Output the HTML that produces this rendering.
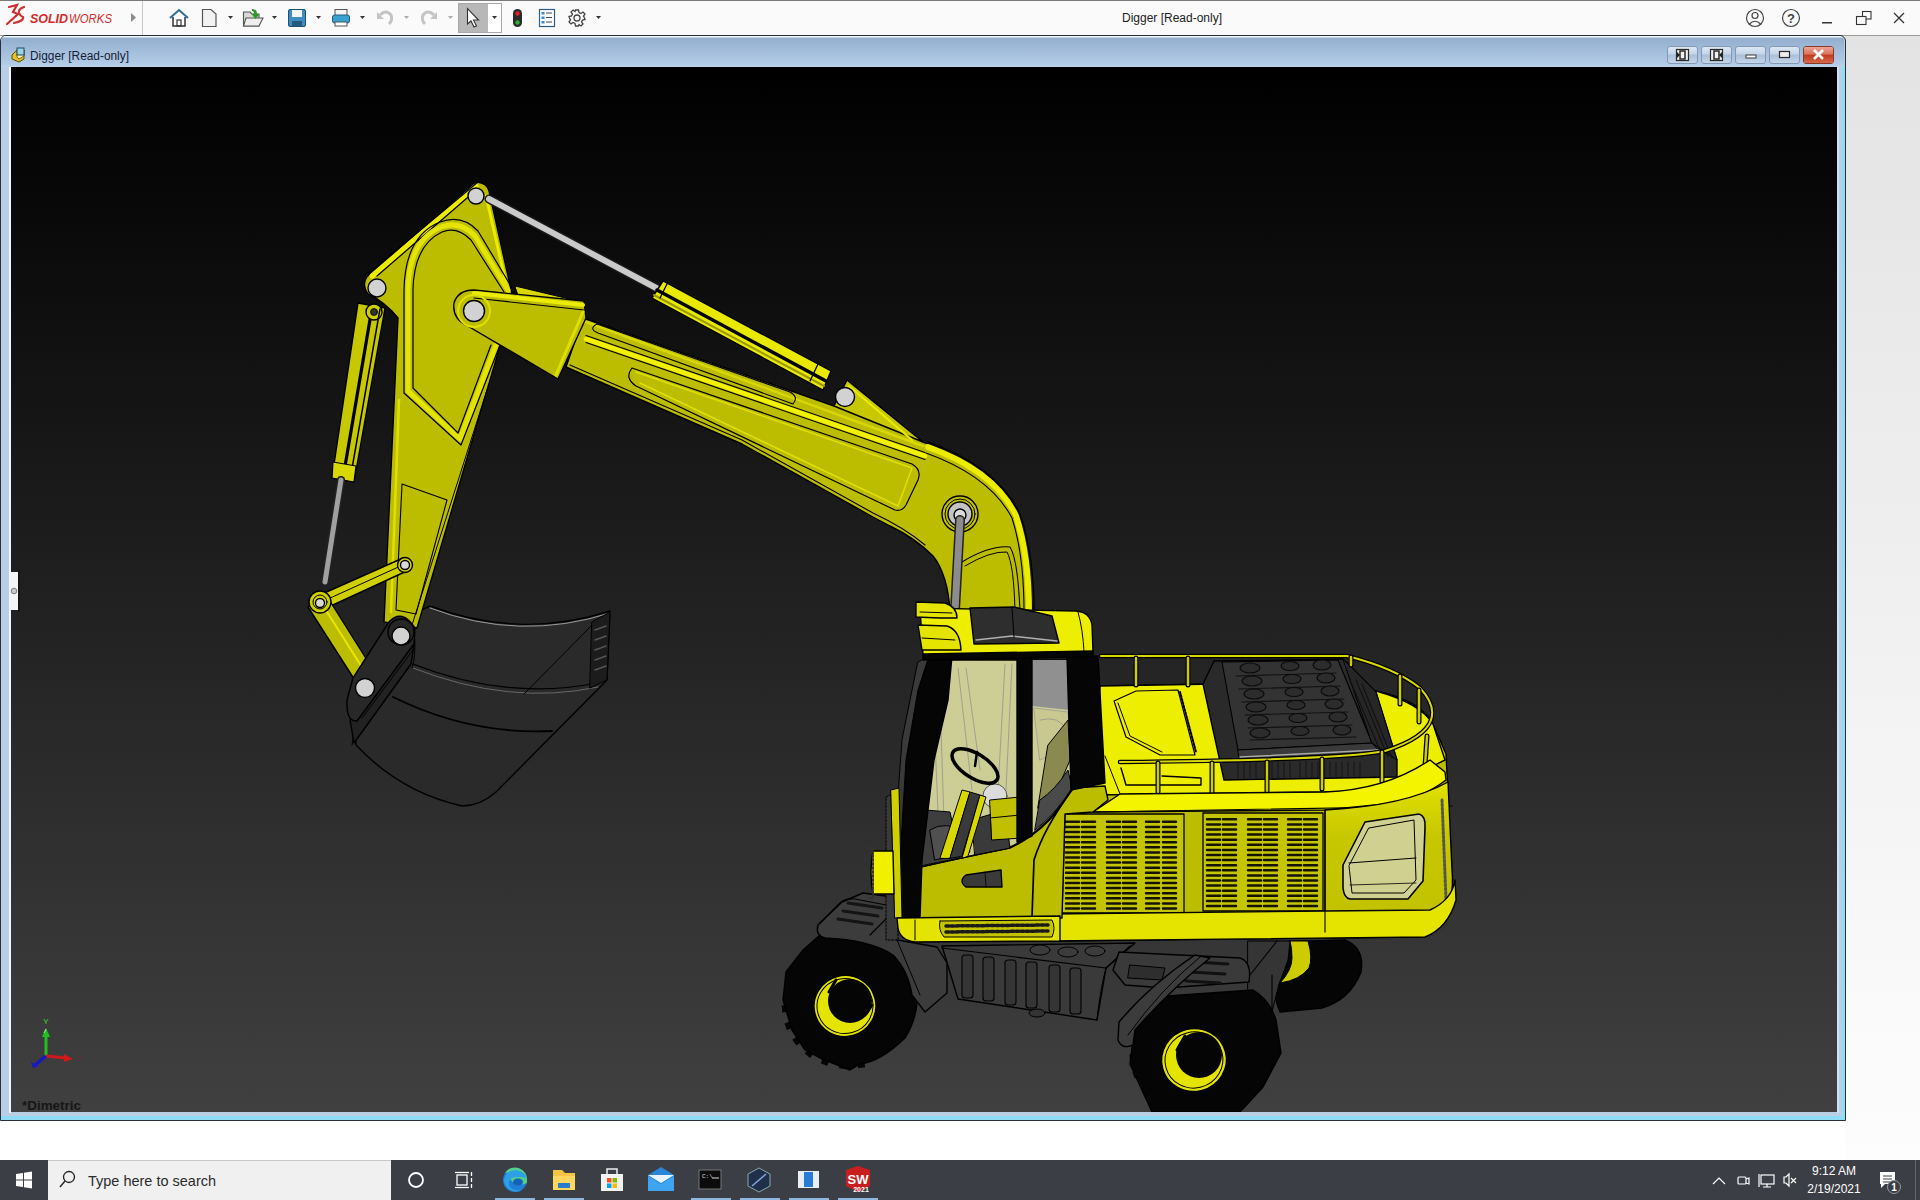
<!DOCTYPE html>
<html><head><meta charset="utf-8">
<style>
*{margin:0;padding:0;box-sizing:border-box}
html,body{width:1920px;height:1200px;overflow:hidden;background:#fff;font-family:"Liberation Sans",sans-serif}
.a{position:absolute}
#topbar{left:0;top:0;width:1920px;height:36px;background:#fafafa;border-bottom:1px solid #d8d8d8}
#rightbg{left:1845px;top:36px;width:75px;height:1124px;background:linear-gradient(#e3e3e3,#fdfdfd)}
#win{left:0;top:35px;width:1846px;height:1086px;background:#b9cfe6;border:1px solid #2a3038;border-radius:6px 6px 0 0}
#wintitle{left:1px;top:36px;width:1843px;height:31px;background:linear-gradient(#eef8fb 0px,#eef8fb 1px,#94afcd 2px,#9db8d6 10px,#b2cbe6 28px,#bcd3ec 31px);border-radius:5px 5px 0 0}
#vp{left:11px;top:67px;width:1826px;height:1045px;background:linear-gradient(#000 0%,#404040 100%)}
#taskbar{left:0;top:1160px;width:1920px;height:40px;background:#3b3e45}
.tt{font-size:12px;color:#1a1a2a}
.wbtn{top:46px;width:30px;height:18px;border:1px solid #8aa0b8;border-radius:3px;background:linear-gradient(#dde8f4,#bfd1e5 50%,#a9bfd8 51%,#c5d6ea)}
</style></head><body>
<div id="topbar" class="a"></div>
<svg class="a" style="left:0;top:0" width="1920" height="36" viewBox="0 0 1920 36">
<line x1="0" y1="0.5" x2="1920" y2="0.5" stroke="#7a7a7a"/>
<line x1="0" y1="35.5" x2="1920" y2="35.5" stroke="#9a9a9a"/>
<!-- 3DS logo -->
<g fill="none" stroke="#d03030" stroke-width="2.2" stroke-linecap="round">
<path d="M9 7 L17 5 L13 12 L18 14 L7 24"/>
<path d="M24 7 Q18 9 19 13 Q20 16 23 17 Q24 21 14 23"/>
</g>
<text x="30" y="23" font-family="Liberation Sans" font-weight="bold" font-style="italic" font-size="13.5" fill="#d42a2a" textLength="38" lengthAdjust="spacingAndGlyphs">SOLID</text>
<text x="69" y="23" font-family="Liberation Sans" font-size="13.5" font-style="italic" fill="#d42a2a" textLength="43" lengthAdjust="spacingAndGlyphs">WORKS</text>
<path d="M131 13 L136 17.5 L131 22 Z" fill="#8a8a8a"/>
<line x1="142.5" y1="1" x2="142.5" y2="35" stroke="#c8c8c8"/>
<!-- home -->
<g stroke="#2d6f96" stroke-width="2" fill="none"><path d="M170 18 L179 10 L188 18"/></g>
<path d="M173 17 L173 26 L185 26 L185 17" fill="#fff" stroke="#333" stroke-width="1.5"/>
<rect x="177" y="20" width="4" height="6" fill="none" stroke="#333" stroke-width="1.2"/>
<!-- new -->
<path d="M202.5 9.5 L211 9.5 L216 14 L216 26.5 L202.5 26.5 Z" fill="#f2f2f2" stroke="#555" stroke-width="1.2"/>
<path d="M228 16 L233 16 L230.5 19 Z" fill="#333"/>
<!-- open -->
<path d="M243.5 12 L250 12 L252 14 L259 14 L259 26 L243.5 26 Z" fill="#d8d8d8" stroke="#555" stroke-width="1.1"/>
<path d="M246 18 L263 18 L259 26 L243.5 26 Z" fill="#eee" stroke="#555" stroke-width="1.1"/>
<path d="M252 9 Q257 9 257 14 L259.5 14 L255.5 19 L251.5 14 L254 14 Q254 11 252 11 Z" fill="#2e9a2e"/>
<path d="M272 16 L277 16 L274.5 19 Z" fill="#333"/>
<!-- save -->
<rect x="288.5" y="9.5" width="17" height="17" rx="1.5" fill="#3f8cc0" stroke="#1f4f73"/>
<rect x="292" y="10" width="10" height="7" fill="#f4f4f4"/>
<rect x="292" y="21" width="10" height="5" fill="#245a80"/>
<path d="M316 16 L321 16 L318.5 19 Z" fill="#333"/>
<!-- print -->
<rect x="335" y="9.5" width="12" height="6" fill="#f4f4f4" stroke="#555"/>
<rect x="332.5" y="15" width="17" height="8" rx="2" fill="#3aa0cf" stroke="#255f80"/>
<rect x="335" y="22" width="12" height="4" fill="#fff" stroke="#555"/>
<path d="M360 16 L365 16 L362.5 19 Z" fill="#333"/>
<!-- undo/redo gray -->
<path d="M380 15 Q386 9 391 15 Q393 20 389 24" fill="none" stroke="#c4c4c4" stroke-width="3"/>
<path d="M377 12 L377 19 L384 19 Z" fill="#c4c4c4"/>
<path d="M404 16 L409 16 L406.5 19 Z" fill="#aaa"/>
<path d="M434 15 Q428 9 423 15 Q421 20 425 24" fill="none" stroke="#c4c4c4" stroke-width="3"/>
<path d="M437 12 L437 19 L430 19 Z" fill="#c4c4c4"/>
<path d="M448 16 L453 16 L450.5 19 Z" fill="#aaa"/>
<!-- select -->
<rect x="458.5" y="3.5" width="43" height="29" fill="#fff" stroke="#a8a8a8"/>
<rect x="459" y="4" width="29" height="28" fill="#b8b8b8"/>
<path d="M467.5 8.5 L467.5 24 L471 21 L474 27 L476.5 26 L473.5 20 L478.5 20 Z" fill="#fff" stroke="#333" stroke-width="1.1"/>
<path d="M492 16 L497 16 L494.5 19 Z" fill="#333"/>
<!-- traffic light -->
<rect x="513" y="9" width="9" height="18" rx="4.5" fill="#2a2a2a"/>
<circle cx="517.5" cy="13.5" r="2.2" fill="#e02020"/>
<circle cx="517.5" cy="22.5" r="2.2" fill="#30b030"/>
<!-- list -->
<rect x="539.5" y="9.5" width="15" height="17" fill="#fff" stroke="#2d5f86" stroke-width="1.2"/>
<rect x="541.5" y="12" width="3" height="2.5" fill="#3a8bc8"/><line x1="546" y1="13" x2="552" y2="13" stroke="#444"/>
<rect x="541.5" y="16.5" width="3" height="2.5" fill="#3a8bc8"/><line x1="546" y1="17.5" x2="552" y2="17.5" stroke="#444"/>
<rect x="541.5" y="21" width="3" height="2.5" fill="#3a8bc8"/><line x1="546" y1="22" x2="552" y2="22" stroke="#444"/>
<!-- gear -->
<g transform="translate(577,18)" fill="none" stroke="#444" stroke-width="1.3">
<circle r="3"/>
<path d="M-1.5 -8 L1.5 -8 L2 -5.5 L4 -4.5 L6 -6 L8 -4 L6.5 -2 L7.5 0 L8 1.5 L5.5 2 L4.5 4 L6 6 L4 8 L2 6.5 L1.5 8 L-1.5 8 L-2 5.5 L-4 4.5 L-6 6 L-8 4 L-6.5 2 L-7.5 0 L-8 -1.5 L-5.5 -2 L-4.5 -4 L-6 -6 L-4 -8 L-2 -6.5 Z"/>
</g>
<path d="M596 16 L601 16 L598.5 19 Z" fill="#333"/>
<text x="1172" y="22" text-anchor="middle" font-family="Liberation Sans" font-size="12" fill="#222">Digger [Read-only]</text>
<!-- right icons -->
<g fill="none" stroke="#444" stroke-width="1.2">
<circle cx="1755" cy="18" r="8.5"/>
<circle cx="1755" cy="15.5" r="3"/>
<path d="M1749 24.5 Q1755 18 1761 24.5"/>
<circle cx="1791" cy="18" r="8.5"/>
</g>
<text x="1791" y="23" text-anchor="middle" font-family="Liberation Sans" font-weight="bold" font-size="13" fill="#444">?</text>
<rect x="1822" y="22" width="10" height="1.5" fill="#333"/>
<g fill="none" stroke="#333" stroke-width="1.1">
<rect x="1862.5" y="11.5" width="8.5" height="7.5"/>
<rect x="1856.5" y="16.5" width="9.5" height="8" fill="#f7f7f7"/>
<line x1="1894" y1="13" x2="1904" y2="23" stroke-width="1.3"/>
<line x1="1904" y1="13" x2="1894" y2="23" stroke-width="1.3"/>
</g>
</svg>
<div id="rightbg" class="a"></div>
<div id="win" class="a"></div>
<div id="wintitle" class="a"></div>
<svg class="a" style="left:0;top:36px" width="1846" height="32" viewBox="0 36 1846 32">
<g transform="translate(11,47)">
<path d="M1 8 L6 3 L13 3 L13 12 L8 15 L1 12 Z" fill="#e8c020" stroke="#5a4a10" stroke-width="1"/>
<path d="M6 3 L13 3 L13 9 L8 12 L6 10 Z" fill="#fff3b0" stroke="#5a4a10" stroke-width="0.8"/>
<rect x="6" y="1" width="7" height="7" fill="#9ad4e0" stroke="#1a4a60" stroke-width="1"/>
</g>
<text x="30" y="60" font-family="Liberation Sans" font-size="12.5" fill="#141c38" textLength="99" lengthAdjust="spacingAndGlyphs">Digger [Read-only]</text>
<defs>
<linearGradient id="wb" x1="0" y1="0" x2="0" y2="1"><stop offset="0" stop-color="#dfe9f4"/><stop offset="0.45" stop-color="#c3d4e7"/><stop offset="0.5" stop-color="#a9bfd8"/><stop offset="1" stop-color="#c6d7ea"/></linearGradient>
<linearGradient id="wr" x1="0" y1="0" x2="0" y2="1"><stop offset="0" stop-color="#eba593"/><stop offset="0.45" stop-color="#d9735a"/><stop offset="0.5" stop-color="#c23a1d"/><stop offset="1" stop-color="#d8694c"/></linearGradient>
</defs>
<g stroke="#8399b3" stroke-width="1">
<rect x="1667.5" y="46.5" width="30" height="17" rx="2.5" fill="url(#wb)"/>
<rect x="1701.5" y="46.5" width="30" height="17" rx="2.5" fill="url(#wb)"/>
<rect x="1735.5" y="46.5" width="30" height="17" rx="2.5" fill="url(#wb)"/>
<rect x="1769.5" y="46.5" width="30" height="17" rx="2.5" fill="url(#wb)"/>
<rect x="1803.5" y="46.5" width="30" height="17" rx="2.5" fill="url(#wb)" stroke="#8a3a2a"/>
</g>
<rect x="1804" y="47" width="29" height="16" rx="2" fill="url(#wr)"/>
<g fill="none" stroke="#2a2a2a" stroke-width="1.2">
<rect x="1676.5" y="49.5" width="12" height="11" fill="#f0f0f0"/>
<rect x="1710.5" y="49.5" width="12" height="11" fill="#f0f0f0"/>
<rect x="1680" y="51" width="5" height="8" stroke-width="1.5"/>
<rect x="1714" y="51" width="5" height="8" stroke-width="1.5"/>
<rect x="1746" y="55" width="10" height="3" fill="#fff" stroke="#555"/>
<rect x="1779.5" y="51.5" width="10" height="6" fill="#eee"/>
</g>
<path d="M1677 52 L1680 55 L1677 58 Z" fill="#222"/>
<path d="M1722 52 L1719 55 L1722 58 Z" fill="#222"/>
<path d="M1814 50 L1823 59 M1823 50 L1814 59" stroke="#fff" stroke-width="2.6"/>
</svg>
<div class="a" style="left:9px;top:67px;width:2px;height:1046px;background:#eef6ff"></div>
<div class="a" style="left:1837px;top:67px;width:2px;height:1046px;background:#eef6ff;opacity:.5"></div>
<div class="a" style="left:1px;top:1116px;width:1844px;height:4px;background:#8fdcf7"></div>
<div class="a" style="left:1842px;top:67px;width:3px;height:1053px;background:#8fdcf7"></div>
<div id="vp" class="a"></div>
<!--EXC--><svg class="a" style="left:0;top:0" width="1920" height="1200" viewBox="0 0 1920 1200"><defs><clipPath id="vpc"><rect x="11" y="67" width="1826" height="1045"/></clipPath></defs><g clip-path="url(#vpc)" stroke="#000" stroke-width="1.4" stroke-linejoin="round" stroke-linecap="round">
<!-- ============ BUCKET ============ -->
<path d="M430 606 Q520 640 610 611 L607 680 L496 792 Q480 806 462 806 Q400 792 356 745 L352 700 L400 620 Z" fill="#2a2a2a"/>
<path d="M430 606 Q520 640 610 611" fill="none" stroke="#9a9a9a" stroke-width="1" transform="translate(0,2)"/>
<path d="M413 664 Q510 702 601 682" fill="none" stroke-width="1.2"/>
<path d="M413 668 Q510 706 598 687" fill="none" stroke="#777" stroke-width="0.8"/>
<path d="M393 697 Q470 735 552 731" fill="none" stroke-width="1.8"/>
<path d="M524 694 L598 619" fill="none" stroke-width="1"/>
<path d="M592 622 L610 612 L607 680 L590 688 Z" fill="#1c1c1c" stroke-width="1"/>
<path d="M595 630 L606 626 M595 640 L606 636 M595 650 L606 646 M595 660 L606 656 M595 670 L606 666" stroke="#555" stroke-width="1.5"/>
<path d="M358 705 L352 745" fill="none" stroke-width="1"/>
<!-- ============ STICK lower ============ -->
<path d="M477 182 Q487 183 489 191 L512 294 L500 346 L417 628 L384 622 L398 318 Q385 302 368 294 Q360 282 370 274 Z" fill="#bcbc00"/>
<path d="M402 484 L447 500 L416 614 L396 610 Z" fill="none" stroke-width="1.1"/>
<path d="M399 400 L391 612" fill="none" stroke="#e0e000" stroke-width="2.5"/>
<path d="M487 390 L412 625" fill="none" stroke-width="1"/>
<!-- bucket cylinder -->
<path d="M358 303 L385 308 L354 482 L332 478 Z" fill="#c8c800"/>
<path d="M372 308 L343 478" fill="none" stroke-width="3.2"/><circle cx="374" cy="312" r="8" fill="#d0d000"/><circle cx="374" cy="312" r="3.5" fill="#333" stroke-width="0.8"/>
<path d="M380 309 L350 480" fill="none" stroke-width="1.5"/>
<path d="M333 462 L356 466 L354 482 L332 478 Z" fill="#d8d800" stroke-width="1.2"/>
<path d="M341 480 L325 582" stroke="#222" stroke-width="8"/>
<path d="M341 480 L325 582" stroke="#a0a0a0" stroke-width="5"/>
<!-- links -->
<path d="M313 598 L403 558 L409 570 L322 610 Z" fill="#d0d000"/>
<path d="M317 604 L405 564" fill="none" stroke-width="1"/>
<path d="M308 607 L328 598 L372 668 L356 682 Z" fill="#bcbc00"/>
<path d="M322 604 L365 672" fill="none" stroke="#e8e800" stroke-width="2"/>
<circle cx="320" cy="602" r="11" fill="#d0d000"/>
<circle cx="320" cy="602" r="7" fill="none" stroke-width="1"/>
<circle cx="320" cy="603" r="4.5" fill="#d8d8d8"/>
<circle cx="405" cy="565" r="7.5" fill="#d0d000"/>
<circle cx="405" cy="565" r="4.5" fill="#d8d8d8"/>
<!-- side plate -->
<path d="M414 644 L411 664 L354 743 L350 720 Z" fill="#222"/>
<path d="M389 622 Q402 608 415 628 L414 644 L357 721 Q346 722 347 700 L353 678 Z" fill="#282828"/>
<path d="M413 650 L362 718" fill="none" stroke-width="1"/>
<path d="M405 618 Q418 622 414 660 L412 668" fill="none" stroke-width="1"/>
<!-- bucket pins -->
<circle cx="401" cy="632" r="13" fill="#262626"/>
<circle cx="401" cy="636" r="9" fill="#d2d2d2"/>
<circle cx="365" cy="688" r="9.5" fill="#d2d2d2"/>
<!-- ============ STICK head ============ -->

<path d="M476 186 L372 276" fill="none" stroke="#ecec00" stroke-width="5"/>
<path d="M478 182 L369 273 M474 192 L377 276" fill="none" stroke-width="1.2"/>
<path d="M486 196 L508 292" fill="none" stroke="#ecec00" stroke-width="3"/>
<path d="M508 290 L475 236 Q460 220 441 227 Q409 240 408 290 L408 391 L460 439 L496 345" fill="none" stroke="#e4e400" stroke-width="5"/>
<path d="M512 288 L478 231 Q462 214 440 222 Q405 236 404 290 L404 393 L461 445 L500 345" fill="none" stroke-width="1.2"/>
<path d="M504 292 L471 240 Q457 226 442 232 Q414 245 413 290 L413 388 L458 433 L491 345" fill="none" stroke-width="1.2"/>
<circle cx="476" cy="196" r="8" fill="#d2d2d2"/>
<circle cx="377" cy="288" r="9" fill="#d2d2d2"/>
<!-- ============ BOOM CYLINDER ============ -->
<path d="M489 199 L660 290" stroke="#1a1a1a" stroke-width="9"/>
<path d="M489 199 L660 290" stroke="#cacaca" stroke-width="6"/>
<path d="M663 281 L831 371 L823 390 L652 298 Z" fill="#e8e800"/>
<path d="M657 290 L826 381" fill="none" stroke-width="3.5"/>
<path d="M654 295 L824 386" fill="none" stroke="#9a9a00" stroke-width="2"/>
<path d="M668 282 L660 298 M818 364 L810 381" fill="none" stroke-width="1.3"/>
<!-- ============ BOOM ============ -->
<path d="M583 318 L834 406 L847 380 L923 442 Q990 465 1013 515 Q1030 555 1032 612 L950 612 Q948 575 933 556 Q915 538 890 526 L873 517 L742 444 L566 367 Z" fill="#bcbc00"/>
<path d="M586 322 L923 446" fill="none" stroke="#d8d800" stroke-width="2.5"/>
<path d="M586 339 L925 456" fill="none" stroke="#f0f000" stroke-width="4.5"/>
<path d="M586 335.5 L925 452.5 M586 342.5 L925 459.5" fill="none" stroke-width="1.1"/>
<path d="M928 447 Q995 471 1016 516 Q1029 555 1029 612" fill="none" stroke="#ecec00" stroke-width="6"/>
<path d="M928 442 Q996 466 1020 514 Q1034 555 1034 612" fill="none"/>
<path d="M926 453 Q990 476 1012 518 Q1024 555 1024 612" fill="none" stroke-width="1.1"/>
<path d="M632 368 L912 464 Q922 470 918 480 L906 505 Q902 512 895 510 L636 386 Q624 378 632 368 Z" fill="#bcbc00" stroke-width="1.2"/>
<path d="M636 372 L912 468 L898 506 L640 383" fill="none" stroke="#e0e000" stroke-width="1.5"/>
<path d="M597 324 L790 392 Q799 397 793 404 L598 333 Q588 329 597 324 Z" fill="none" stroke-width="1.1"/>
<path d="M570 365 L742 440 L873 513 Q905 528 925 545" fill="none" stroke-width="1.1"/>
<path d="M834 406 L847 380 L923 442 Z" fill="#c8c800"/>
<path d="M840 402 L849 386 L912 440" fill="none" stroke="#ecec00" stroke-width="2"/>
<circle cx="845" cy="397" r="9.5" fill="#d2d2d2"/>
<path d="M962 562 Q990 545 1010 547 Q1018 560 1020 612" fill="none" stroke-width="1.1"/><path d="M965 566 Q990 551 1007 552 Q1014 565 1015 612" fill="none" stroke-width="1"/>

<circle cx="960" cy="514" r="18" fill="#c0c000"/>
<circle cx="960" cy="514" r="15" fill="none" stroke-width="1"/>
<circle cx="960" cy="514" r="12" fill="#c4c4c4"/>
<circle cx="960" cy="515" r="6" fill="#dcdcdc"/>
<path d="M960 520 L955 610" stroke="#222" stroke-width="10"/>
<path d="M960 520 L955 610" stroke="#8c8c8c" stroke-width="7"/>
<!-- boom end box -->
<path d="M515 286 L582 302 L587 318 L520 300 Z" fill="#d8d800" stroke-width="1"/>
<path d="M474 290 L584 301 L586 318 L558 379 L466 325 Q452 318 454 303 Q458 290 474 290 Z" fill="#bcbc00"/>
<path d="M474 293 L583 305" fill="none" stroke="#ecec00" stroke-width="4"/>
<path d="M474 298 L584 310" fill="none" stroke-width="1.1"/>
<path d="M583 312 L556 375" fill="none" stroke="#e0e000" stroke-width="3"/>
<circle cx="474" cy="311" r="16" fill="none" stroke="#e0e000" stroke-width="2"/>
<circle cx="474" cy="311" r="10.5" fill="#d2d2d2"/>
</g>
<g clip-path="url(#vpc)" stroke="#000" stroke-width="1.4" stroke-linejoin="round" stroke-linecap="round">
<!-- ============ FAR WHEEL ============ -->
<path d="M1274 942 L1345 940 Q1365 948 1361 972 Q1350 1000 1322 1008 L1280 1012 Q1270 990 1274 942 Z" fill="#050505"/>
<path d="M1290 941 L1308 941 Q1313 958 1309 968 Q1300 980 1280 983 Q1292 970 1292 958 Q1292 948 1290 941 Z" fill="#cccc00" stroke-width="1"/>
<path d="M1248 941 L1290 941 L1288 960 L1279 984 L1272 1012 L1248 1012 Z" fill="#353535" stroke-width="1"/>
<path d="M1277 941 L1250 975 M1272 975 L1272 1012" fill="none" stroke-width="1.1"/>
<!-- ============ CHASSIS ============ -->
<path d="M942 946 L1135 943 L1106 968 L1097 1020 L958 999 Z" fill="#3a3a3a"/>
<path d="M942 948 L1106 968 L1130 946" fill="none" stroke-width="1.2"/>
<path d="M1106 968 Q1100 990 1097 1020" fill="none" stroke-width="1"/>
<g fill="#353535" stroke-width="1.1">
<rect x="962" y="955" width="11" height="43" rx="3"/><rect x="983" y="957" width="11" height="44" rx="3"/>
<rect x="1005" y="960" width="11" height="45" rx="3"/><rect x="1026" y="962" width="11" height="46" rx="3"/>
<rect x="1049" y="965" width="11" height="47" rx="3"/><rect x="1070" y="968" width="11" height="46" rx="3"/>
</g>
<g fill="#3c3c3c" stroke-width="1"><ellipse cx="1040" cy="950" rx="10" ry="5"/><ellipse cx="1068" cy="952" rx="10" ry="5"/><ellipse cx="1095" cy="951" rx="10" ry="5"/></g>
<ellipse cx="1037" cy="1013" rx="8" ry="4" fill="#333" stroke-width="1"/>
<!-- rear step plate -->
<path d="M1113 970 L1119 952 L1240 958 Q1252 962 1249 982 L1165 988 L1125 985 Z" fill="#3a3a3a"/>
<path d="M1130 965 L1165 968 L1162 980 L1128 978 Z" fill="#2e2e2e" stroke-width="1"/>
<path d="M1195 962 L1228 964 M1190 972 L1225 974 M1186 981 L1220 983" stroke="#111" stroke-width="3"/>
<!-- ============ FRONT WHEEL ============ -->
<g fill="#050505" stroke="none"><rect x="-3.5" y="-2.5" width="7" height="5" transform="translate(861.3,1065.3) rotate(170.6)"/><rect x="-3.5" y="-2.5" width="7" height="5" transform="translate(842.8,1066.3) rotate(187.4)"/><rect x="-3.5" y="-2.5" width="7" height="5" transform="translate(824.9,1062.3) rotate(203.8)"/><rect x="-3.5" y="-2.5" width="7" height="5" transform="translate(809.0,1053.8) rotate(219.6)"/><rect x="-3.5" y="-2.5" width="7" height="5" transform="translate(796.4,1041.3) rotate(234.9)"/><rect x="-3.5" y="-2.5" width="7" height="5" transform="translate(788.0,1025.9) rotate(250.0)"/><rect x="-3.5" y="-2.5" width="7" height="5" transform="translate(784.5,1008.7) rotate(265.1)"/><rect x="-3.5" y="-2.5" width="7" height="5" transform="translate(786.2,991.1) rotate(-79.6)"/><rect x="-3.5" y="-2.5" width="7" height="5" transform="translate(792.9,974.3) rotate(-63.8)"/><rect x="-3.5" y="-2.5" width="7" height="5" transform="translate(804.0,959.8) rotate(-47.4)"/><rect x="-3.5" y="-2.5" width="7" height="5" transform="translate(818.8,948.7) rotate(-30.6)"/><rect x="-3.5" y="-2.5" width="7" height="5" transform="translate(1215.8,1113.1) rotate(170.0)"/><rect x="-3.5" y="-2.5" width="7" height="5" transform="translate(1195.4,1114.2) rotate(188.8)"/><rect x="-3.5" y="-2.5" width="7" height="5" transform="translate(1175.8,1110.4) rotate(206.6)"/><rect x="-3.5" y="-2.5" width="7" height="5" transform="translate(1158.5,1102.1) rotate(222.9)"/><rect x="-3.5" y="-2.5" width="7" height="5" transform="translate(1144.8,1089.8) rotate(237.9)"/><rect x="-3.5" y="-2.5" width="7" height="5" transform="translate(1135.9,1074.5) rotate(252.0)"/><rect x="-3.5" y="-2.5" width="7" height="5" transform="translate(1132.3,1057.5) rotate(265.7)"/><rect x="-3.5" y="-2.5" width="7" height="5" transform="translate(1134.5,1040.0) rotate(-80.4)"/><rect x="-3.5" y="-2.5" width="7" height="5" transform="translate(1142.3,1023.5) rotate(-65.6)"/><rect x="-3.5" y="-2.5" width="7" height="5" transform="translate(1154.9,1009.3) rotate(-49.5)"/></g>

<path d="M820 935 L878 943 Q905 960 915 985 Q922 1010 905 1038 Q880 1062 860 1064 L850 1070 L820 1058 L805 1050 L792 1030 L783 1000 L786 972 L803 950 Z" fill="#050505"/>
<ellipse cx="845" cy="1006" rx="31" ry="30.5" fill="#e4e400" transform="rotate(-15 845 1006)"/>
<ellipse cx="845" cy="1006" rx="28" ry="27.5" fill="none" stroke-width="1" transform="rotate(-15 845 1006)"/>
<circle cx="850" cy="1001" r="22" fill="#050505" stroke="none"/><path d="M829 992 L836 980 M866 1014 L872 1005" stroke="#050505" stroke-width="3"/>
<!-- front fender -->
<path d="M842 902 L863 893 L893 897 L897 940 L937 947 L947 963 L947 993 L925 1012 L912 995 Q908 970 893 955 Q870 940 825 938 Q815 935 818 925 Z" fill="#3c3c3c"/>
<path d="M820 923 L840 903 Q845 898 855 899 L886 905 Q894 908 889 916 L870 935" fill="none" stroke-width="1.2"/>
<path d="M838 919 L872 924 M843 911 L878 916 M848 903 L882 908" stroke="#141414" stroke-width="3"/>
<path d="M897 940 L920 995" fill="none" stroke-width="1"/>
<path d="M893 897 L897 940" fill="none" stroke-width="1"/>
<!-- ============ REAR WHEEL ============ -->
<path d="M1153 997 L1253 990 Q1270 1000 1276 1020 L1281 1053 L1263 1087 L1240 1112 L1152 1112 L1130 1064 L1135 1024 Z" fill="#050505"/>
<ellipse cx="1194" cy="1060" rx="32.5" ry="31.4" fill="#e4e400" transform="rotate(-15 1194 1060)"/>
<ellipse cx="1194" cy="1060" rx="29" ry="28" fill="none" stroke-width="1" transform="rotate(-15 1194 1060)"/>
<circle cx="1199" cy="1055" r="23" fill="#050505" stroke="none"/><path d="M1177 1050 L1185 1036 M1219 1057 L1206 1075" stroke="#050505" stroke-width="3"/>
<!-- rear guard -->
<path d="M1195 955 L1210 958 Q1170 990 1135 1030 L1133 1045 Q1122 1050 1118 1040 L1119 1022 Q1150 985 1195 955 Z" fill="#3c3c3c"/>
<path d="M1200 957 Q1160 990 1128 1035" fill="none" stroke-width="1"/>
<!-- ============ ENGINE HOUSING ============ -->
<!-- main side (behind) -->
<path d="M1093 686 L1216 684 L1376 691 Q1420 700 1433 724 L1446 754 L1452 870 Q1455 900 1440 925 L1420 937 L1050 941 L1090 800 Z" fill="#bcbc00"/>
<!-- deck top surface -->
<path d="M1100 686 L1216 684 L1376 691 Q1420 703 1433 724 L1445 760 L1385 790 L1325 792 L1093 795 Z" fill="#eeee00"/>
<!-- hatch -->
<path d="M1114 701 L1136 691 L1178 690 L1195 755 L1160 755 L1126 737 Z" fill="#eeee00" stroke-width="1.2"/>
<path d="M1118 703 L1130 736 L1162 752" fill="none" stroke-width="1"/>
<path d="M1180 692 L1196 752" fill="none" stroke-width="2" stroke-dasharray="2 1.5"/>
<path d="M1121 768 L1126 785 L1201 785 L1201 778 L1162 776" fill="none" stroke-width="1.4"/>
<!-- black engine cover -->
<path d="M1214 661 L1343 659 L1376 692 L1397 760 L1397 777 L1224 780 L1203 684 Z" fill="#2a2a2a"/>
<path d="M1222 662 L1338 660 L1372 743 L1238 750 Z" fill="#333" stroke-width="1.1"/>
<path d="M1238 750 L1372 743 L1380 752 L1240 760 Z" fill="#3a3a3a" stroke-width="1"/>
<path d="M1240 757 L1378 750" stroke="#aaa" stroke-width="1.5"/>
<path d="M1343 659 L1376 692 L1397 760 L1372 743 Z" fill="#262626" stroke-width="1"/>
<g stroke="#111" stroke-width="1.1"><path d="M1350 680 L1382 755 M1356 680 L1388 757 M1362 684 L1392 758"/></g>
<g stroke="#151515" stroke-width="1"><path d="M1300 762 L1300 778 M1306 762 L1306 778 M1312 762 L1312 778 M1318 762 L1318 778 M1324 762 L1324 778 M1330 762 L1330 778 M1336 762 L1336 778 M1342 762 L1342 778 M1348 762 L1348 778 M1354 762 L1354 778 M1360 762 L1360 778 M1290 762 L1290 778 M1284 762 L1284 778 M1278 762 L1278 778 M1272 762 L1272 778 M1266 762 L1266 778 M1250 762 L1250 778 M1256 762 L1256 778 M1244 762 L1244 778 M1238 762 L1238 778"/></g>
<g fill="none" stroke="#111" stroke-width="1.2">
<path d="M1236 676 L1336 673 M1239 689 L1340 686 M1242 702 L1344 699 M1245 715 L1348 712 M1248 728 L1352 725 M1250 740 L1356 737"/>
</g>
<g fill="#2c2c2c" stroke="#0a0a0a" stroke-width="1.2">
<ellipse cx="1250" cy="668" rx="10" ry="5"/><ellipse cx="1290" cy="666" rx="9" ry="4.5"/><ellipse cx="1322" cy="665" rx="9" ry="5"/>
<ellipse cx="1252" cy="681" rx="10" ry="5"/><ellipse cx="1292" cy="679" rx="9" ry="4.5"/><ellipse cx="1326" cy="678" rx="9" ry="5"/>
<ellipse cx="1254" cy="694" rx="10" ry="5"/><ellipse cx="1294" cy="692" rx="9" ry="4.5"/><ellipse cx="1330" cy="691" rx="9" ry="5"/>
<ellipse cx="1256" cy="707" rx="10" ry="5"/><ellipse cx="1296" cy="705" rx="9" ry="4.5"/><ellipse cx="1334" cy="704" rx="9" ry="5"/>
<ellipse cx="1258" cy="720" rx="10" ry="5"/><ellipse cx="1298" cy="718" rx="9" ry="4.5"/><ellipse cx="1338" cy="717" rx="9" ry="5"/>
<ellipse cx="1260" cy="733" rx="10" ry="5"/><ellipse cx="1300" cy="731" rx="9" ry="4.5"/><ellipse cx="1342" cy="730" rx="9" ry="5"/>
</g>
<!-- railing -->
<g fill="none">
<path d="M1101 656 L1347 656 Q1395 668 1420 688 Q1436 705 1431 720 Q1425 738 1385 751 Q1340 760 1120 762" stroke="#000" stroke-width="4.5"/>
<path d="M1101 656 L1347 656 Q1395 668 1420 688 Q1436 705 1431 720 Q1425 738 1385 751 Q1340 760 1120 762" stroke="#d8d800" stroke-width="2"/>
</g>
<g stroke="#000" stroke-width="5"><path d="M1136 658 L1136 685 M1188 658 L1188 685 M1351 657 L1351 665 M1400 676 L1400 704 M1419 690 L1419 722 M1427 736 L1425 766 M1158 763 L1158 792 M1212 763 L1212 792 M1267 762 L1267 792 M1322 759 L1322 789 M1382 752 L1382 782"/></g>
<g stroke="#cccc00" stroke-width="2.5"><path d="M1136 658 L1136 685 M1188 658 L1188 685 M1351 657 L1351 665 M1400 676 L1400 704 M1419 690 L1419 722 M1427 736 L1425 766 M1158 763 L1158 792 M1212 763 L1212 792 M1267 762 L1267 792 M1322 759 L1322 789 M1382 752 L1382 782"/></g>
<!-- deck front rim band -->
<path d="M1093 812 L1120 794 L1325 792 Q1385 790 1430 760 L1445 772 L1446 780 Q1420 800 1385 804 L1325 810 L1093 812 Z" fill="#f4f400"/>
<path d="M1105 756 L1120 794" fill="none" stroke-width="1"/>
<!-- side panel frame lines -->
<path d="M1093 812 L1452 806" fill="none" stroke-width="1.2"/>
<!-- grille panels -->
<path d="M1065 814 L1184 814 L1184 913 L1062 913 Z" fill="#c4c400" stroke-width="1.3"/>
<path d="M1203 813 L1323 813 L1323 911 L1203 911 Z" fill="#c4c400" stroke-width="1.3"/>
<g id="slots" stroke="#141400" stroke-width="2.5">
<path d="M1066 821.8 L1079 821.8 M1066 826.9 L1079 826.9 M1066 832.0 L1079 832.0 M1066 837.1 L1079 837.1 M1066 842.2 L1079 842.2 M1066 847.3 L1079 847.3 M1066 852.4 L1079 852.4 M1066 857.5 L1079 857.5 M1066 862.6 L1079 862.6 M1066 867.7 L1079 867.7 M1066 872.8 L1079 872.8 M1066 877.9 L1079 877.9 M1066 883.0 L1079 883.0 M1066 888.1 L1079 888.1 M1066 893.2 L1079 893.2 M1066 898.3 L1079 898.3 M1066 903.4 L1079 903.4 M1066 908.5 L1079 908.5"/>
</g>
<use href="#slots" x="16"/><use href="#slots" x="41"/><use href="#slots" x="57"/><use href="#slots" x="80"/><use href="#slots" x="97"/><use href="#slots" x="141" y="-2.5"/><use href="#slots" x="157" y="-2.5"/><use href="#slots" x="182" y="-2.5"/><use href="#slots" x="198" y="-2.5"/><use href="#slots" x="222" y="-2.5"/><use href="#slots" x="238" y="-2.5"/>
<!-- rear side -->
<defs><linearGradient id="rg" x1="0" y1="0" x2="0" y2="1"><stop offset="0" stop-color="#e2e200"/><stop offset="0.35" stop-color="#c8c800"/><stop offset="1" stop-color="#c0c000"/></linearGradient></defs><path d="M1325 810 Q1405 806 1448 782 L1452 870 Q1455 900 1440 925 L1325 932 Z" fill="url(#rg)"/>
<path d="M1442 800 L1446 900" fill="none" stroke="#555" stroke-width="3" stroke-dasharray="2 2"/>
<path d="M1365 822 L1419 814 Q1426 816 1425 828 L1423 881 L1408 899 L1350 899 Q1344 898 1343 888 L1343 865 Z" fill="#d0d090" stroke-width="1.6"/>
<path d="M1369 828 L1414 820 L1416 880 L1404 893 L1352 893 L1349 866 Z" fill="none" stroke-width="1"/>
<path d="M1349 863 L1416 858" fill="none" stroke-width="1"/>
<path d="M1350 885 L1416 883" fill="none" stroke-width="0.8"/>
<!-- housing bottom band -->
<path d="M1050 914 L1325 911 L1430 910 Q1452 900 1455 880 L1456 900 Q1448 928 1425 937 L1050 941 Z" fill="#e4e400"/>
<path d="M1325 810 L1325 932" fill="none" stroke-width="1.1"/>
<!-- ============ CAB ============ -->
<!-- cab lower body -->
<path d="M916 868 Q960 858 1010 848 Q1050 830 1072 788 L1105 786 L1108 800 L1093 812 L1065 814 L1062 918 L902 918 Z" fill="#bcbc00"/>
<!-- glass -->
<path d="M950 660 L1068 660 L1072 788 Q1048 830 1008 848 Q960 858 916 868 L925 760 Z" fill="#cdcd96"/>
<path d="M1032 660 L1068 660 L1069 710 L1032 706 Z" fill="#909090" stroke="none"/>
<path d="M1034 708 L1068 712 L1070 745 L1040 760 Z" fill="#c8c890" stroke="#999" stroke-width="0.8"/>
<!-- interior -->
<g fill="none" stroke="#a0a090" stroke-width="1">
<path d="M958 668 L972 790 M966 668 L980 770 M1005 664 L998 790 M1012 664 L1006 790 M940 700 L944 820 M935 740 L940 860"/>
<path d="M1040 720 Q1060 715 1066 730"/>
</g>
<path d="M925 810 L950 812 L960 858 L920 866 Z" fill="#3e3e3e" stroke-width="1"/>
<path d="M930 830 Q945 820 965 832 L970 852 L935 860 Z" fill="#505050" stroke-width="1"/>
<path d="M972 820 L1005 810 L1010 848 L975 855 Z" fill="#3a3a3a" stroke-width="1"/>
<circle cx="995" cy="796" r="12" fill="#dcdcdc" stroke-width="0.6"/>
<path d="M1048 745 L1068 720 L1070 760 L1055 795 L1038 808 Z" fill="#8a8a50" stroke-width="1"/>
<path d="M1040 800 Q1055 790 1068 770 L1072 788 Q1055 815 1035 830 Z" fill="#4a4a4a" stroke-width="1"/>
<path d="M990 800 L1020 797 L1022 838 L992 840 Z" fill="#c0c000" stroke-width="1"/>
<path d="M990 818 L1020 815" fill="none" stroke-width="1"/>
<path d="M940 858 L962 790 L970 792 L950 858 Z" fill="#d8d800" stroke-width="1"/>
<path d="M950 858 L970 792 L980 795 L962 856 Z" fill="#3a3a3a" stroke-width="1"/>
<path d="M962 858 L980 795 L986 797 L968 856 Z" fill="#d8d800" stroke-width="1"/>
<ellipse cx="975" cy="766" rx="26" ry="12" transform="rotate(32 975 766)" fill="none" stroke="#000" stroke-width="3.5"/>
<path d="M975 766 L977 752" stroke="#000" stroke-width="2.5"/>
<!-- pillars -->
<path d="M929 656 L952 656 L948 700 L934 760 L922 860 L920 918 L902 918 L900 860 L906 760 L918 690 Z" fill="#050505"/>
<path d="M918 662 L929 656 L918 690 L906 760 L900 860 L900 918 L893 918 L894 850 L902 740 Z" fill="#3a3a3a" stroke-width="1"/>
<path d="M1017 656 L1032 656 L1032 836 L1017 842 Z" fill="#050505"/>
<path d="M1067 656 L1098 656 L1105 783 L1071 790 Z" fill="#050505"/>
<!-- door details -->
<path d="M1072 790 Q1044 828 1034 860 L1032 917" fill="none" stroke-width="1.7"/>
<path d="M966 875 L1001 870 L1002 887 L966 887 Q958 881 966 875 Z" fill="#3a3a3a"/>
<path d="M985 872 L986 887" fill="none" stroke-width="0.8"/>
<!-- lamp and left strip -->
<path d="M886 797 L897 792 L898 940 L886 940 Z" fill="#3a3a3a" stroke-width="1" stroke-dasharray="2 1.5"/>
<path d="M891 790 L899 788 L902 918 L895 918 Z" fill="#d0d000" stroke-width="1"/>
<path d="M873 851 L893 851 L894 894 L873 894 Q869 872 873 851 Z" fill="#f0f000"/>
<path d="M868 848 L873 848 L873 898 L868 898" fill="none" stroke="#333" stroke-width="2" stroke-dasharray="2 2"/>
<!-- cab bottom band -->
<path d="M897 918 L1060 916 L1060 941 L915 942 Q900 940 898 928 Z" fill="#e4e400"/>
<path d="M915 920 L915 940" fill="none" stroke-width="1"/>
<path d="M940 921 L1052 920 Q1056 928 1052 937 L944 937 Q938 930 940 921 Z" fill="#c4c400" stroke-width="1"/>
<path d="M946 926 L1048 925 M946 932 L1048 931" stroke="#1a1a1a" stroke-width="3.5" stroke-dasharray="3 2"/>
<!-- roof -->
<path d="M920 608 L1076 611 Q1090 612 1092 625 L1093 652 L923 655 Z" fill="#eeee00"/>
<path d="M1078 612 Q1083 630 1084 652" fill="none" stroke-width="1"/>
<path d="M923 654 L1093 651 L1093 657 L923 660 Z" fill="#050505"/>
<path d="M970 608 L1014 607 L1052 616 L1059 643 L974 644 Z" fill="#2e2e2e"/>
<path d="M976 640 L1012 636 L1057 641" fill="none" stroke="#b0b0b0" stroke-width="1.5"/>
<path d="M1012 607 L1014 637" fill="none" stroke-width="1"/>
<path d="M916 602 L945 603 Q957 607 957 618 L940 618 L916 617 Z" fill="#e4e400"/>
<path d="M918 625 L947 626 Q960 630 961 650 L922 650 Z" fill="#e4e400"/>
<path d="M920 612 L952 613 M922 638 L955 640" fill="none" stroke-width="1"/>
</g>
<g>
<rect x="10" y="572" width="8" height="38" fill="#f6f4f2"/>
<rect x="18" y="570" width="2" height="42" fill="#151515"/>
<circle cx="14" cy="591" r="2.8" fill="#c8c8c8" stroke="#666" stroke-width="0.8"/>
<!-- triad -->
<path d="M46 1056 L46 1034" stroke="#20c020" stroke-width="3"/>
<path d="M42 1037 L46 1028 L50 1037 Z" fill="#20c020"/>
<path d="M44 1033 L46 1029" stroke="#cfc" stroke-width="0.8"/>
<text x="46" y="1024" text-anchor="middle" font-family="Liberation Sans" font-size="8" fill="#30e030">Y</text>
<path d="M46 1056 L66 1058" stroke="#d01818" stroke-width="3"/>
<path d="M64 1054 L73 1059 L64 1062 Z" fill="#d01818"/>
<text x="80" y="1061" text-anchor="middle" font-family="Liberation Sans" font-size="7" fill="#6a2a2a">X</text>
<path d="M46 1056 L35 1065" stroke="#1818c0" stroke-width="3.5"/>
<path d="M31 1062 L33 1068 L39 1066 Z" fill="#1818c0"/>
<text x="22" y="1110" font-family="Liberation Sans" font-weight="bold" font-size="12.5" fill="#161616" textLength="59" lengthAdjust="spacingAndGlyphs">*Dimetric</text>
</g>
</svg><!--/EXC--><div id="taskbar" class="a"></div><svg class="a" style="left:0;top:1160px" width="1920" height="40" viewBox="0 1160 1920 40">
<g fill="#fff">
<path d="M16 1174 L23 1173 L23 1179.5 L16 1179.5 Z"/>
<path d="M24 1172.8 L32 1171.6 L32 1179.5 L24 1179.5 Z"/>
<path d="M16 1180.5 L23 1180.5 L23 1187 L16 1186 Z"/>
<path d="M24 1180.5 L32 1180.5 L32 1188.4 L24 1187.2 Z"/>
</g>
<rect x="48" y="1160" width="343" height="40" fill="#f0f0f0"/>
<line x1="48" y1="1160.5" x2="391" y2="1160.5" stroke="#c8c8c8"/>
<circle cx="69" cy="1177" r="5.5" fill="none" stroke="#222" stroke-width="1.3"/>
<line x1="65" y1="1181" x2="60" y2="1187" stroke="#222" stroke-width="1.4"/>
<text x="88" y="1186" font-family="Liberation Sans" font-size="15" fill="#2b2b2b" textLength="128" lengthAdjust="spacingAndGlyphs">Type here to search</text>
<circle cx="416" cy="1180" r="7" fill="none" stroke="#fff" stroke-width="1.8"/>
<g fill="none" stroke="#fff" stroke-width="1.3">
<rect x="457" y="1175" width="10" height="10"/>
<line x1="455" y1="1172.5" x2="469" y2="1172.5"/><line x1="455" y1="1187.5" x2="469" y2="1187.5"/>
<line x1="471.5" y1="1172" x2="471.5" y2="1176"/><line x1="471.5" y1="1178" x2="471.5" y2="1182"/><line x1="471.5" y1="1184" x2="471.5" y2="1188"/>
</g>
<!-- edge -->
<circle cx="515" cy="1180" r="12" fill="#1d7fd6"/>
<path d="M505 1173 A12 12 0 0 1 527 1181 L527 1183 Q520 1186 514 1183 Q508 1179 511 1174 Q508 1172 505 1173 Z" fill="#52cf8a"/>
<path d="M504 1180 Q506 1170 516 1170 Q524 1171 527 1178 Q518 1176 512 1178 Q507 1181 510 1187 Q513 1191 522 1190 A12 12 0 0 1 504 1180 Z" fill="#2ea0e8"/>
<ellipse cx="518" cy="1182" rx="5" ry="3.5" fill="#1560b8"/>
<!-- explorer -->
<path d="M553 1170 L562 1170 L565 1173 L575 1173 L575 1190 L553 1190 Z" fill="#f4c542"/>
<path d="M553 1176 L575 1176 L575 1190 L553 1190 Z" fill="#ffd75e"/>
<rect x="558" y="1183" width="12" height="5" fill="#2a7ad0"/>
<!-- store -->
<path d="M601 1174 L623 1174 L623 1191 L601 1191 Z" fill="#f2f2f2"/>
<path d="M607 1174 L607 1169 L617 1169 L617 1174" fill="none" stroke="#eee" stroke-width="1.5"/>
<rect x="607" y="1178" width="4.5" height="4.5" fill="#f25022"/><rect x="612.5" y="1178" width="4.5" height="4.5" fill="#7fba00"/>
<rect x="607" y="1183.5" width="4.5" height="4.5" fill="#00a4ef"/><rect x="612.5" y="1183.5" width="4.5" height="4.5" fill="#ffb900"/>
<!-- mail -->
<path d="M648 1175 L661 1167 L674 1175 L674 1191 L648 1191 Z" fill="#2a86d8"/>
<path d="M648 1176 L661 1184 L674 1176 L674 1191 L648 1191 Z" fill="#3fa4f0"/>
<path d="M648 1175 L674 1175 L661 1183 Z" fill="#e8f4ff"/>
<!-- terminal -->
<rect x="699" y="1170" width="22" height="19" fill="#0c0c0c" stroke="#777" stroke-width="1"/>
<text x="702" y="1178" font-family="Liberation Mono" font-size="6" fill="#ddd">C:\</text><path d="M712 1178 L719 1178" stroke="#ddd" stroke-width="1"/>
<!-- app hex -->
<path d="M759 1168 L770 1174 L770 1186 L759 1192 L748 1186 L748 1174 Z" fill="#20304a" stroke="#8aa" stroke-width="1"/>
<line x1="752" y1="1186" x2="766" y2="1174" stroke="#7fa7e0" stroke-width="1.5"/>
<!-- app blue -->
<rect x="798" y="1171" width="21" height="17" fill="#e8eef6"/>
<rect x="804" y="1172" width="9" height="15" fill="#2a7ad8"/>
<!-- SW -->
<path d="M846 1170 L858 1166 L870 1170 L870 1186 L858 1192 L846 1186 Z" fill="#c81e1e"/>
<text x="858" y="1184" text-anchor="middle" font-family="Liberation Sans" font-weight="bold" font-size="13" fill="#fff">SW</text>
<text x="861" y="1192" text-anchor="middle" font-family="Liberation Sans" font-weight="bold" font-size="7" fill="#fff">2021</text>
<g fill="#8fb8e0">
<rect x="495" y="1198" width="40" height="2"/><rect x="544" y="1198" width="40" height="2"/>
<rect x="691" y="1198" width="40" height="2"/><rect x="740" y="1198" width="40" height="2"/>
<rect x="789" y="1198" width="40" height="2"/><rect x="838" y="1198" width="40" height="2"/>
</g>
<!-- tray -->
<g fill="none" stroke="#fff" stroke-width="1.2">
<path d="M1713 1184 L1719 1178 L1725 1184"/>
<rect x="1738" y="1177" width="8" height="7" rx="1"/>
<path d="M1746 1179 L1749 1178 L1749 1184 L1746 1183"/>
<rect x="1761" y="1175" width="13" height="9"/>
<path d="M1767 1184 L1767 1187 M1763 1187 L1771 1187 M1759 1174 L1759 1187"/>
<path d="M1784 1177 L1786 1177 L1789 1174 L1789 1186 L1786 1183 L1784 1183 Z"/>
<path d="M1791 1178 L1796 1183 M1796 1178 L1791 1183"/>
</g>
<text x="1834" y="1175" text-anchor="middle" font-family="Liberation Sans" font-size="12" fill="#fff">9:12 AM</text>
<text x="1834" y="1193" text-anchor="middle" font-family="Liberation Sans" font-size="12" fill="#fff">2/19/2021</text>
<path d="M1880 1172 L1895 1172 L1895 1184 L1885 1184 L1881 1188 L1881 1184 L1880 1184 Z" fill="#fff"/>
<path d="M1883 1176 L1892 1176 M1883 1179 L1892 1179 M1883 1182 L1890 1182" stroke="#3b3e45" stroke-width="1.2"/>
<circle cx="1894" cy="1187" r="6.5" fill="#3b3e45" stroke="#999" stroke-width="1"/>
<text x="1894" y="1191" text-anchor="middle" font-family="Liberation Sans" font-weight="bold" font-size="10" fill="#fff">1</text>
<line x1="1915.5" y1="1160" x2="1915.5" y2="1200" stroke="#666"/>
</svg>

</body></html>
